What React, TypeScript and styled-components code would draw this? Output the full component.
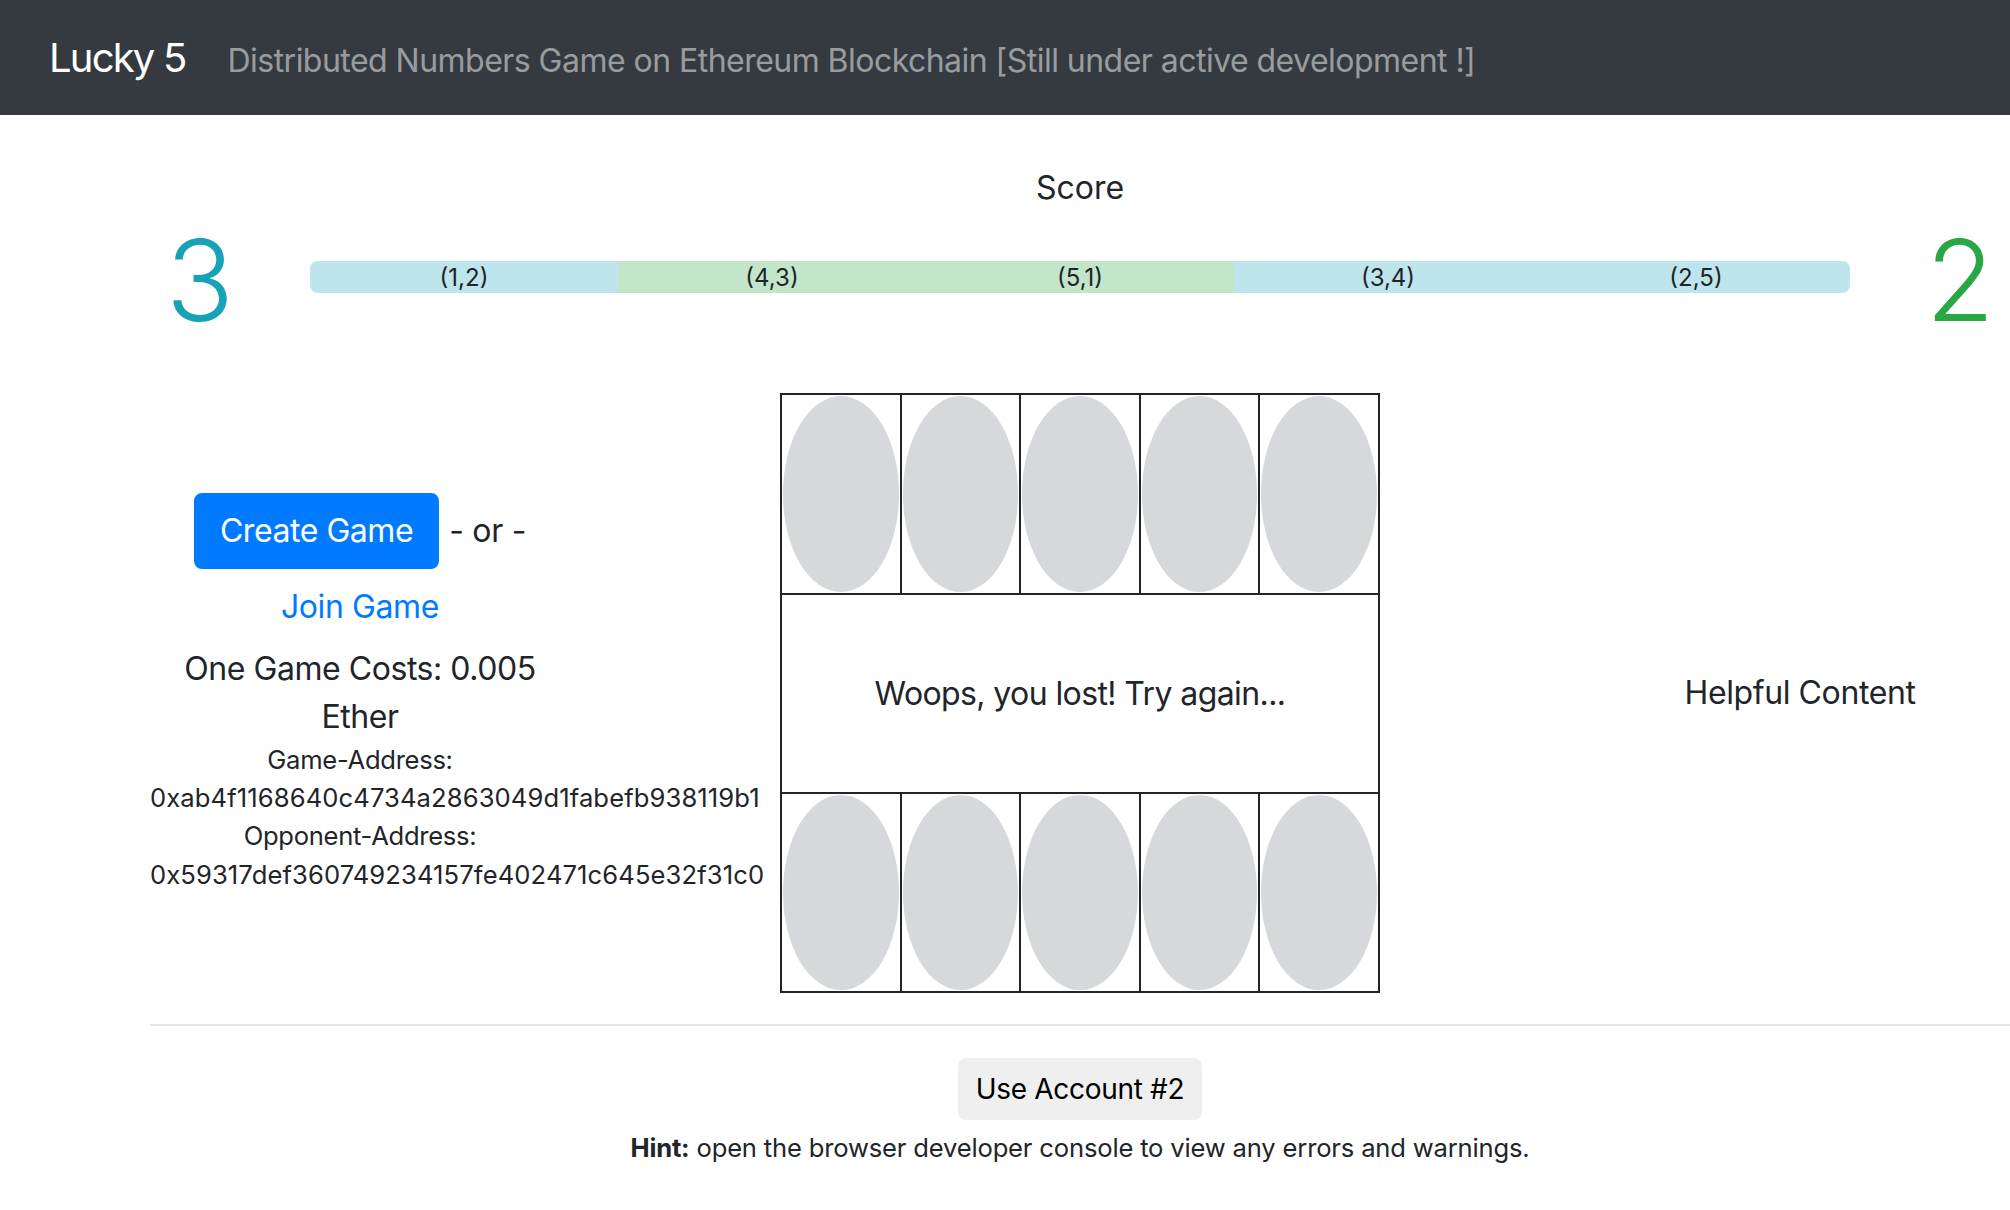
import React from "react";
import styled, { createGlobalStyle } from "styled-components";

const Global = createGlobalStyle`
  html, body { margin: 0; padding: 0; background: #fff; }
  body {
    font-family: Inter, "Noto Sans", "Liberation Sans", sans-serif;
    color: #212529;
    overflow-x: hidden;
  }
  * { box-sizing: border-box; }
`;

const Navbar = styled.header`
  height: 115px;
  background: #343a40;
  display: flex;
  align-items: baseline;
  padding: 34px 0 0 49px;
`;

const Brand = styled.span`
  font-size: 40px;
  line-height: 48px;
  color: #fff;
  margin-right: 42px;
  letter-spacing: -1.8px;
`;

const NavText = styled.span`
  font-size: 32px;
  line-height: 48px;
  color: rgba(255, 255, 255, 0.5);
  letter-spacing: -0.53px;
`;

const Main = styled.main`
  padding-left: 150px;
  width: 2010px;
`;

const ScoreLabel = styled.div`
  text-align: center;
  font-size: 32px;
  line-height: 48px;
  margin-top: 49px;
`;

const ScoreRow = styled.div`
  display: grid;
  grid-template-columns: 100px 1fr 100px;
  column-gap: 60px;
  align-items: center;
  margin-top: 1px;
`;

const BigNum = styled.div<{ $color: string }>`
  font-size: 112px;
  line-height: 1.2;
  font-weight: 300;
  text-align: center;
  color: ${(p) => p.$color};
`;

const Progress = styled.div`
  display: flex;
  height: 32px;
  margin-bottom: 6px;
  border-radius: 8px;
  overflow: hidden;
  background: #e9ecef;
`;

const Segment = styled.div<{ $bg: string }>`
  flex: 1;
  display: flex;
  align-items: center;
  justify-content: center;
  font-size: 24px;
  color: #212529;
  background: ${(p) => p.$bg};
`;

const GameRow = styled.div`
  display: grid;
  grid-template-columns: 420px 1fr 420px;
  column-gap: 60px;
  align-items: center;
  margin-top: 46px;
`;

const LeftCol = styled.div`
  text-align: center;
  font-size: 32px;
  line-height: 48px;
`;

const CreateLine = styled.div`
  display: flex;
  justify-content: center;
  align-items: center;
  gap: 10px;
`;

const PrimaryButton = styled.button`
  font-family: inherit;
  font-size: 32px;
  line-height: 48px;
  padding: 12px 24px;
  border: 2px solid #007bff;
  border-radius: 8px;
  background: #007bff;
  color: #fff;
  cursor: pointer;
  letter-spacing: -0.45px;
`;

const Or = styled.span`
  font-size: 32px;
  letter-spacing: -0.3px;
`;

const JoinLink = styled.a`
  display: block;
  margin-top: 14px;
  color: #007bff;
  text-decoration: none;
  letter-spacing: -0.4px;
`;

const Costs = styled.div`
  margin-top: 14px;
  letter-spacing: -0.45px;
`;

const Small = styled.div<{ $mono?: boolean }>`
  font-size: 25.6px;
  line-height: 38.4px;
  white-space: nowrap;
  letter-spacing: ${(p) => (p.$mono ? "0.1px" : "-0.3px")};
`;

const BoardWrap = styled.div`
  display: flex;
  justify-content: center;
`;

const Board = styled.div`
  width: 600px;
  height: 600px;
  display: grid;
  grid-template-columns: repeat(5, 1fr);
  grid-template-rows: repeat(3, 1fr);
  border-top: 2px solid #212529;
  border-left: 2px solid #212529;
`;

const Cell = styled.div`
  border-right: 2px solid #212529;
  border-bottom: 2px solid #212529;
  padding: 1px;
  display: flex;
`;

const Ball = styled.div`
  flex: 1;
  border-radius: 50%;
  background: #d6d8db;
`;

const Message = styled.div`
  grid-column: 1 / span 5;
  border-right: 2px solid #212529;
  border-bottom: 2px solid #212529;
  display: flex;
  align-items: center;
  justify-content: center;
  font-size: 32px;
  letter-spacing: -0.6px;
`;

const RightCol = styled.div`
  text-align: center;
  font-size: 32px;
  line-height: 48px;
  letter-spacing: -0.4px;
`;

const Rule = styled.hr`
  margin: 31px 0 32px;
  border: 0;
  border-top: 2px solid rgba(0, 0, 0, 0.1);
`;

const Footer = styled.div`
  display: flex;
  flex-direction: column;
  align-items: center;
`;

const LightButton = styled.button`
  font-family: inherit;
  font-size: 28px;
  line-height: 42px;
  padding: 10px 18px 10px;
  border: 0;
  border-radius: 8px;
  background: #efefef;
  color: #000;
  letter-spacing: -0.3px;
`;

const Hint = styled.p`
  margin: 9px 0 0;
  font-size: 25.6px;
  line-height: 38.4px;
  letter-spacing: -0.18px;
`;

const segments = [
  { label: "(1,2)", bg: "#bee5eb" },
  { label: "(4,3)", bg: "#c3e6cb" },
  { label: "(5,1)", bg: "#c3e6cb" },
  { label: "(3,4)", bg: "#bee5eb" },
  { label: "(2,5)", bg: "#bee5eb" },
];

export default function App() {
  const five = [0, 1, 2, 3, 4];
  return (
    <>
      <Global />
      <Navbar>
        <Brand>Lucky 5</Brand>
        <NavText>
          Distributed Numbers Game on Ethereum Blockchain [Still under active development !]
        </NavText>
      </Navbar>
      <Main>
        <ScoreLabel>Score</ScoreLabel>
        <ScoreRow>
          <BigNum $color="#17a2b8">3</BigNum>
          <Progress>
            {segments.map((s) => (
              <Segment key={s.label} $bg={s.bg}>
                {s.label}
              </Segment>
            ))}
          </Progress>
          <BigNum $color="#28a745">2</BigNum>
        </ScoreRow>
        <GameRow>
          <LeftCol>
            <CreateLine>
              <PrimaryButton>Create Game</PrimaryButton>
              <Or>- or -</Or>
            </CreateLine>
            <JoinLink href="#">Join Game</JoinLink>
            <Costs>
              One Game Costs: 0.005
              <br />
              Ether
            </Costs>
            <Small>Game-Address:</Small>
            <Small $mono>0xab4f1168640c4734a2863049d1fabefb938119b1</Small>
            <Small>Opponent-Address:</Small>
            <Small $mono>0x59317def360749234157fe402471c645e32f31c0</Small>
          </LeftCol>
          <BoardWrap>
            <Board>
              {five.map((i) => (
                <Cell key={"t" + i}>
                  <Ball />
                </Cell>
              ))}
              <Message>Woops, you lost! Try again...</Message>
              {five.map((i) => (
                <Cell key={"b" + i}>
                  <Ball />
                </Cell>
              ))}
            </Board>
          </BoardWrap>
          <RightCol>Helpful Content</RightCol>
        </GameRow>
        <Rule />
        <Footer>
          <LightButton>Use Account #2</LightButton>
          <Hint>
            <strong>Hint:</strong> open the browser developer console to view any errors and warnings.
          </Hint>
        </Footer>
      </Main>
    </>
  );
}
